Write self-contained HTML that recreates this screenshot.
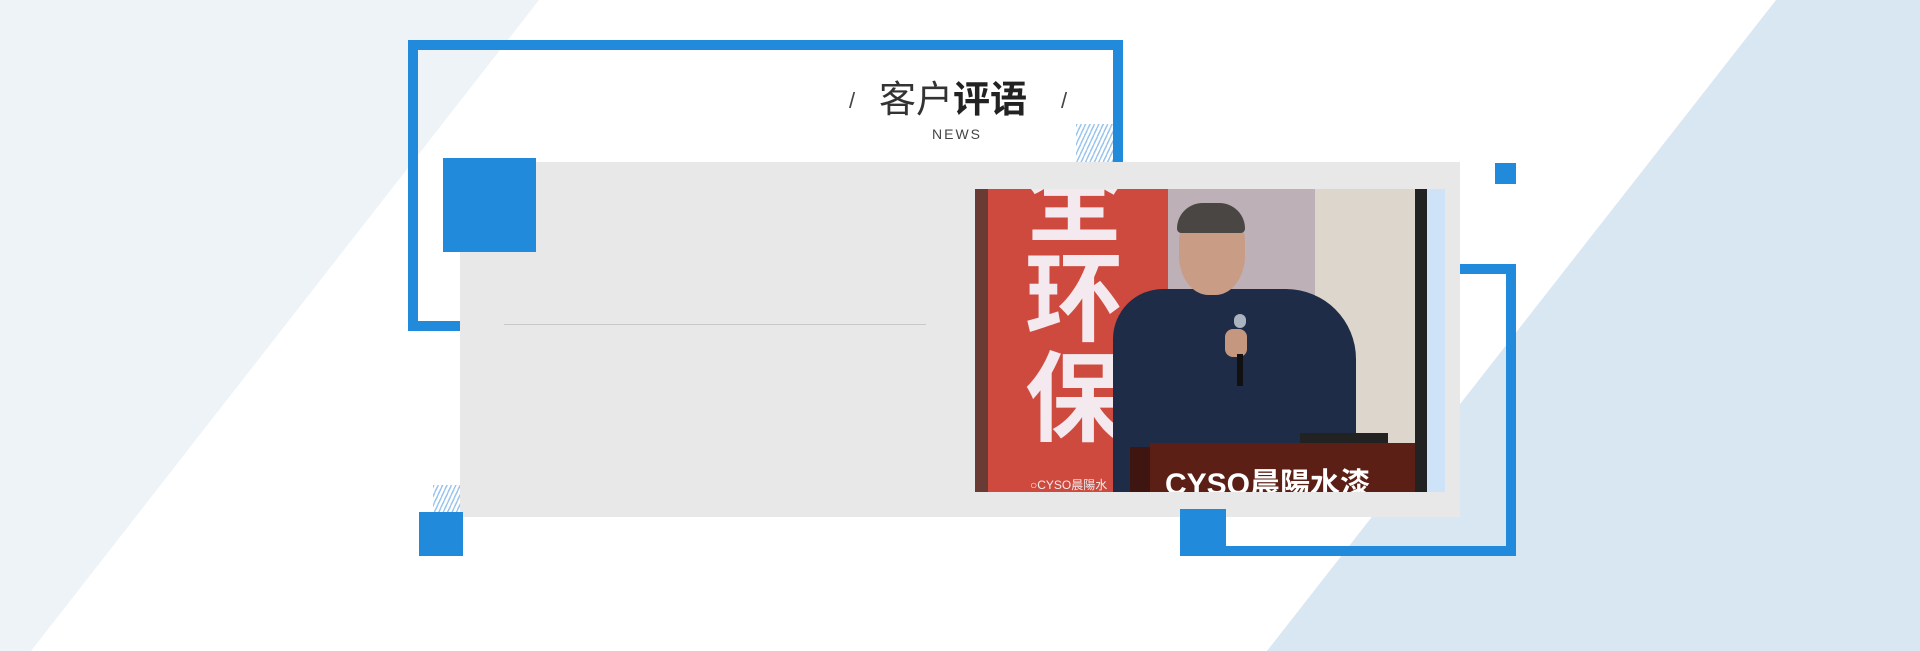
<!DOCTYPE html>
<html><head><meta charset="utf-8"><style>
*{margin:0;padding:0;box-sizing:border-box}
body{width:1920px;height:651px;overflow:hidden;background:#fff;position:relative;font-family:"Liberation Sans","Noto Sans CJK SC",sans-serif}
.a{position:absolute}
.blue{background:#228ada}
.hatch{background:repeating-linear-gradient(115deg,#9cc6ee 0 1.5px,transparent 1.5px 4px)}
</style></head><body>
<svg class="a" style="left:0;top:0" width="1920" height="651">
<polygon points="0,0 539,0 31,651 0,651" fill="#eef3f8"/>
<polygon points="1776,0 1920,0 1920,651 1267,651" fill="#d9e7f2"/>
</svg>
<div class="a" style="left:408px;top:40px;width:715px;height:291px;border:10px solid #228ada"></div>
<div class="a hatch" style="left:1076px;top:124px;width:37px;height:38px"></div>
<div class="a" style="left:1180px;top:264px;width:336px;height:292px;border:10px solid #228ada;border-left:none"></div>
<div class="a blue" style="left:1495px;top:163px;width:21px;height:21px"></div>
<div class="a hatch" style="left:433px;top:485px;width:27px;height:27px"></div>
<div class="a" style="left:460px;top:162px;width:1000px;height:355px;background:#e8e8e8"></div>
<div class="a blue" style="left:1180px;top:509px;width:46px;height:47px"></div>
<div class="a blue" style="left:419px;top:512px;width:44px;height:44px"></div>
<div class="a blue" style="left:443px;top:158px;width:93px;height:94px"></div>
<div class="a" style="left:504px;top:324px;width:422px;height:1px;background:#c8c8c8"></div>
<div class="a" style="left:849px;top:88px;font-size:22px;color:#444">/</div>
<div class="a" style="left:1061px;top:88px;font-size:22px;color:#444">/</div>
<div class="a" style="left:879px;top:78px;font-size:37px;color:#333;white-space:nowrap;line-height:44px">客户<b style="color:#222">评语</b></div>
<div class="a" style="left:932px;top:126px;font-size:14px;color:#444;letter-spacing:2px">NEWS</div>
<div class="a" style="left:975px;top:189px;width:470px;height:303px;overflow:hidden;background:#e3ddd3">
 <div class="a" style="left:0;top:0;width:13px;height:303px;background:#6a3a34"></div>
 <div class="a" style="left:13px;top:0;width:180px;height:303px;background:#cf4a3e"></div>
 <div class="a" style="left:193px;top:0;width:147px;height:303px;background:#bdb0b6"></div>
 <div class="a" style="left:340px;top:0;width:100px;height:303px;background:#ddd6cc"></div>
 <div class="a" style="left:440px;top:0;width:12px;height:303px;background:#222"></div>
 <div class="a" style="left:452px;top:0;width:18px;height:303px;background:#cfe3f8"></div>
 <div class="a" style="left:50px;top:-40px;font-size:98px;line-height:100px;color:#f3e9ee;font-weight:bold;width:110px">全<br>环<br>保</div>
 <div class="a" style="left:55px;top:287px;font-size:12px;color:#eee">○CYSO晨陽水</div>
 <div class="a" style="left:138px;top:100px;width:243px;height:230px;background:#1f2c48;border-radius:50px 70px 0 0"></div>
 <div class="a" style="left:204px;top:18px;width:66px;height:88px;background:#c99c86;border-radius:40% 40% 45% 45%"></div>
 <div class="a" style="left:202px;top:14px;width:68px;height:30px;background:#4a4644;border-radius:35px 35px 6px 6px"></div>
 <div class="a" style="left:250px;top:140px;width:22px;height:28px;background:#c5977e;border-radius:8px"></div>
 <div class="a" style="left:259px;top:125px;width:12px;height:14px;background:#aab3c0;border-radius:6px"></div>
 <div class="a" style="left:262px;top:165px;width:6px;height:32px;background:#111"></div>
 <div class="a" style="left:155px;top:258px;width:20px;height:45px;background:#3e1510"></div>
 <div class="a" style="left:175px;top:254px;width:265px;height:49px;background:#5c1f16"></div>
 <div class="a" style="left:325px;top:244px;width:88px;height:10px;background:#222"></div>
 <div class="a" style="left:190px;top:270px;font-size:30px;color:#fff;font-weight:bold;white-space:nowrap">CYSO晨陽水漆</div>
</div>
</body></html>
